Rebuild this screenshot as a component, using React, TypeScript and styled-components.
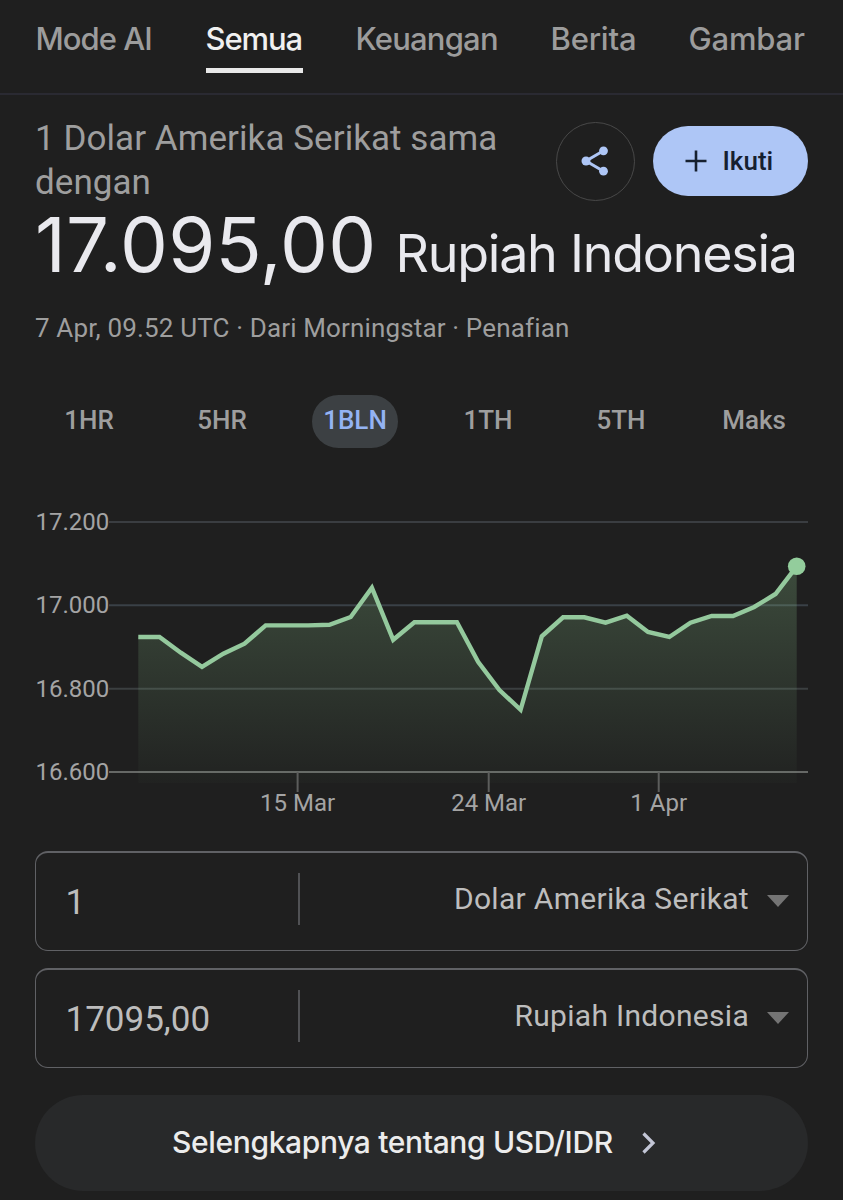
import React from "react";
import styled, { createGlobalStyle } from "styled-components";

const display = `Inter, "Liberation Sans", sans-serif`;
const body = `Roboto, "Liberation Sans", sans-serif`;

const GlobalStyle = createGlobalStyle`
  *, *::before, *::after { box-sizing: border-box; }
  body { margin: 0; background: #1f1f1f; }
  button { border: 0; padding: 0; margin: 0; background: none; font: inherit; color: inherit; }
`;

const Page = styled.main`
  width: 843px;
  height: 1200px;
  overflow: hidden;
  background: #1f1f1f;
  color: #9e9e9e;
  font-family: ${body};
`;

const Nav = styled.nav`
  display: flex;
  align-items: flex-start;
  gap: 53px;
  height: 95px;
  padding: 18px 0 0 36px;
  border-bottom: 2px solid #2a2a32;
`;

const Tab = styled.a<{ $width: number; $spacing: number; $active?: boolean }>`
  flex: none;
  width: ${(p) => p.$width}px;
  height: 55px;
  font: ${(p) => (p.$active ? 500 : 450)} 31px/42px ${display};
  letter-spacing: ${(p) => p.$spacing}px;
  text-indent: -0.5px;
  white-space: nowrap;
  color: ${(p) => (p.$active ? "#f0f0f0" : "#9c9c9c")};
  border-bottom: ${(p) => (p.$active ? "5px solid #e8e8e8" : "0")};
`;

const Content = styled.div`
  display: flex;
  flex-direction: column;
  padding: 0 35px;
`;

const Header = styled.header`
  display: flex;
  justify-content: space-between;
  height: 110px;
  padding-top: 22px;
`;

const Lead = styled.div`
  width: 490px;
  font-size: 35px;
  line-height: 44px;
  letter-spacing: 0.06px;
`;

const Actions = styled.div`
  display: flex;
  align-items: center;
  gap: 18px;
  height: 88px;
`;

const ShareButton = styled.button`
  display: grid;
  place-items: center;
  width: 79px;
  height: 79px;
  padding-right: 1.5px;
  border: 1.5px solid #484848;
  border-radius: 50%;
`;

const FollowButton = styled.button`
  display: flex;
  align-items: center;
  gap: 16px;
  width: 155px;
  height: 70px;
  padding-left: 31.5px;
  border-radius: 35px;
  background: #aec6f6;
  color: #16202f;
  font: 500 26px/70px ${body};
`;

const Rate = styled.div`
  display: flex;
  align-items: baseline;
  height: 80px;
  color: #e9e9ee;
  font-family: ${display};
  white-space: nowrap;
`;

const Amount = styled.span`
  flex: none;
  width: 360.5px;
  font-size: 76px;
  font-weight: 430;
  line-height: 79px;
  letter-spacing: 0.2px;
`;

const Currency = styled.span`
  flex: none;
  font-size: 52px;
  line-height: 79px;
  letter-spacing: -1.25px;
`;

const Source = styled.div`
  height: 40px;
  margin-top: 23px;
  font-size: 26px;
  line-height: 40px;
  letter-spacing: 0.15px;
  white-space: nowrap;
`;

const Ranges = styled.div`
  display: flex;
  margin: 47px -12.5px 0;
`;

const RangeCell = styled.div`
  display: flex;
  flex: 1;
  justify-content: center;
`;

const Range = styled.button<{ $active?: boolean }>`
  height: 53px;
  padding: 0 11.5px 3px;
  border-radius: 27px;
  background: ${(p) => (p.$active ? "#3c4043" : "transparent")};
  color: ${(p) => (p.$active ? "#94b3f3" : "#9e9e9e")};
  font: 500 26px/50px ${body};
`;

const Chart = styled.svg`
  display: block;
  width: 843px;
  height: 340px;
  margin: 42px 0 0 -35px;
  font: 24px ${body};
  fill: #a4a4a4;
`;

const Fields = styled.div`
  display: flex;
  flex-direction: column;
  gap: 17px;
  margin-top: 21px;
`;

const Field = styled.div`
  display: flex;
  align-items: center;
  height: 100px;
  padding: 0 18px 6px 29px;
  border: 1.5px solid #606165;
  border-top-width: 2px;
  border-radius: 13px;
  color: #bdbdbd;
`;

const Value = styled.div`
  width: 235px;
  height: 52px;
  padding-left: 0.5px;
  border-right: 2px solid #505154;
  font-size: 35px;
  line-height: 59px;
`;

const Unit = styled.div`
  flex: 1;
  text-align: right;
  font-size: 30px;
  line-height: 50px;
  letter-spacing: 0.3px;
`;

const Caret = styled.svg`
  width: 22px;
  height: 12px;
  margin: 4px 0 0 18px;
  fill: #747474;
`;

const More = styled.button`
  display: flex;
  align-items: center;
  height: 96px;
  margin-top: 27px;
  padding-left: 137px;
  border-radius: 48px;
  background: #28292a;
  color: #ececec;
  font: 500 30px/92px ${display};
  white-space: nowrap;
`;

const MoreLabel = styled.span`
  width: 469px;
  padding-bottom: 3px;
  text-align: left;
  letter-spacing: -0.36px;
`;

const tabs = [
  { label: "Mode AI", width: 117, spacing: -1 },
  { label: "Semua", width: 97, spacing: -1.1, active: true },
  { label: "Keuangan", width: 142, spacing: -0.8 },
  { label: "Berita", width: 85, spacing: -0.2 },
  { label: "Gambar", width: 117, spacing: -0.2 },
];

const ranges = ["1HR", "5HR", "1BLN", "1TH", "5TH", "Maks"];

const series = [
  147, 147, 162.7, 176.8, 163.7, 153.7, 135.4, 135.4, 135.4, 134.8, 127, 97.7,
  149.8, 132.3, 132.3, 132.3, 171.7, 200, 219.8, 146.3, 127.3, 127.3, 132.7,
  125.7, 142, 147, 132.7, 126, 126, 117, 104, 76.3,
];
const step = (796.7 - 138.3) / (series.length - 1);
const linePoints = series.map((y, i) => `${(138.3 + i * step).toFixed(1)},${y}`).join(" ");

const gridLines = [
  { y: 32, label: "17.200", color: "#3a3d41" },
  { y: 115.3, label: "17.000", color: "#3a4147" },
  { y: 198.7, label: "16.800", color: "#3b3f40" },
  { y: 282, label: "16.600", color: "#666866" },
];

const ticks = [
  { x: 297.6, label: "15 Mar" },
  { x: 488.7, label: "24 Mar" },
  { x: 658.7, label: "1 Apr" },
];

export default function App() {
  return (
    <Page>
      <GlobalStyle />
      <Nav>
        {tabs.map((t) => (
          <Tab key={t.label} $width={t.width} $spacing={t.spacing} $active={t.active}>
            {t.label}
          </Tab>
        ))}
      </Nav>
      <Content>
        <Header>
          <Lead>1 Dolar Amerika Serikat sama dengan</Lead>
          <Actions>
            <ShareButton aria-label="Bagikan">
              <svg width="28" height="30" viewBox="0 0 28 30">
                <path d="M22.500 4.800 5 15l17.500 10.200" fill="none" stroke="#aec6f6" strokeWidth="3" />
                <g fill="#aec6f6">
                  <circle cx="22.500" cy="4.800" r="4.400" />
                  <circle cx="5" cy="15" r="4.500" />
                  <circle cx="22.500" cy="25.200" r="4.400" />
                </g>
              </svg>
            </ShareButton>
            <FollowButton>
              <svg width="22" height="22" viewBox="0 0 22 22">
                <path d="M11 .5v21M.5 11h21" stroke="#16202f" strokeWidth="2.600" />
              </svg>
              Ikuti
            </FollowButton>
          </Actions>
        </Header>
        <Rate>
          <Amount>17.095,00</Amount>
          <Currency>Rupiah Indonesia</Currency>
        </Rate>
        <Source>7 Apr, 09.52 UTC · Dari Morningstar · Penafian</Source>
        <Ranges>
          {ranges.map((r) => (
            <RangeCell key={r}>
              <Range $active={r === "1BLN"}>{r}</Range>
            </RangeCell>
          ))}
        </Ranges>
        <Chart viewBox="0 0 843 340">
          <defs>
            <linearGradient id="area" gradientUnits="userSpaceOnUse" x1="0" y1="76" x2="0" y2="293">
              <stop offset="0" stopColor="#8ec78e" stopOpacity="0.26" />
              <stop offset="1" stopColor="#8ec78e" stopOpacity="0.02" />
            </linearGradient>
          </defs>
          {gridLines.map((g) => (
            <g key={g.label}>
              <path d={`M109 ${g.y}H808`} stroke={g.color} strokeWidth="2" />
              <text x="35.500" y={g.y + 7.8}>{g.label}</text>
            </g>
          ))}
          <polygon points={`138.3,293 ${linePoints} 796.7,293`} fill="url(#area)" />
          {ticks.map((t) => (
            <g key={t.label}>
              <path d={`M${t.x} 282v20`} stroke="#5c5d5c" strokeWidth="2" />
              <text x={t.x} y="321" textAnchor="middle">{t.label}</text>
            </g>
          ))}
          <polyline points={linePoints} fill="none" stroke="#94c99d" strokeWidth="4.400" />
          <circle cx="796.7" cy="76.300" r="8.800" fill="#93cd9c" />
        </Chart>
        <Fields>
          {[
            ["1", "Dolar Amerika Serikat"],
            ["17095,00", "Rupiah Indonesia"],
          ].map(([value, unit]) => (
            <Field key={unit}>
              <Value>{value}</Value>
              <Unit>{unit}</Unit>
              <Caret viewBox="0 0 22 12">
                <path d="M0 0h22L11 12z" />
              </Caret>
            </Field>
          ))}
        </Fields>
        <More>
          <MoreLabel>Selengkapnya tentang USD/IDR</MoreLabel>
          <svg width="16" height="24" viewBox="0 0 16 24">
            <path d="M2.500 2.500 12 12l-9.500 9.500" fill="none" stroke="#c3c6d6" strokeWidth="3.200" />
          </svg>
        </More>
      </Content>
    </Page>
  );
}
